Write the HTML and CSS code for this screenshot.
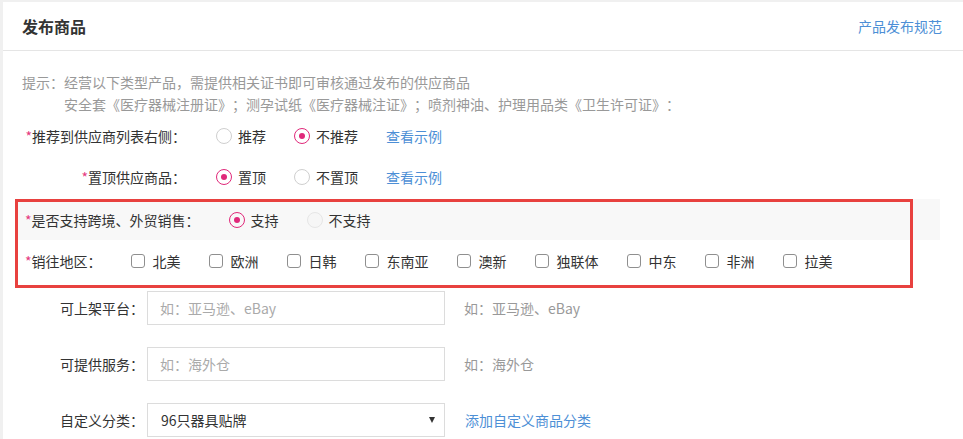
FILE: index.html
```html
<!DOCTYPE html>
<html lang="zh-CN">
<head>
    <meta charset="UTF-8">
    <meta name="viewport" content="width=device-width, initial-scale=1.0">
    <title>发布商品</title>
    <link rel="stylesheet" href="styles.css">
</head>
<body>
    <div class="panel">
        <div class="panel-head">
            <h1 class="panel-title">发布商品</h1>
            <a class="link" href="#">产品发布规范</a>
        </div>

        <div class="notice">
            <p>提示：经营以下类型产品，需提供相关证书即可审核通过发布的供应商品</p>
            <p class="notice-sub">安全套《医疗器械注册证》；测孕试纸《医疗器械注证》；喷剂神油、护理用品类《卫生许可证》：</p>
        </div>

        <div class="form-row">
            <label class="row-label"><i>*</i>推荐到供应商列表右侧：</label>
            <span class="radio"><span class="dot"></span>推荐</span>
            <span class="radio"><span class="dot on"></span>不推荐</span>
            <a class="link" href="#">查看示例</a>
        </div>
        <div class="form-row">
            <label class="row-label"><i>*</i>置顶供应商品：</label>
            <span class="radio"><span class="dot on"></span>置顶</span>
            <span class="radio"><span class="dot"></span>不置顶</span>
            <a class="link" href="#">查看示例</a>
        </div>

        <!-- 跨境区域（红框标注） -->
        <div class="cross-border">
            <div class="form-row shaded">
                <label class="free-label"><i>*</i>是否支持跨境、外贸销售：</label>
                <span class="radio"><span class="dot on"></span>支持</span>
                <span class="radio"><span class="dot off"></span>不支持</span>
            </div>
            <div class="form-row">
                <label class="free-label"><i>*</i>销往地区：</label>
                <span class="check"><span class="box"></span>北美</span>
                <span class="check"><span class="box"></span>欧洲</span>
                <span class="check"><span class="box"></span>日韩</span>
                <span class="check"><span class="box"></span>东南亚</span>
                <span class="check"><span class="box"></span>澳新</span>
                <span class="check"><span class="box"></span>独联体</span>
                <span class="check"><span class="box"></span>中东</span>
                <span class="check"><span class="box"></span>非洲</span>
                <span class="check"><span class="box"></span>拉美</span>
            </div>
            <div class="mark"></div>
        </div>

        <div class="field">
            <label class="field-label">可上架平台：</label>
            <input class="text-input" type="text" placeholder="如：亚马逊、eBay">
            <span class="field-hint">如：亚马逊、eBay</span>
        </div>
        <div class="field">
            <label class="field-label">可提供服务：</label>
            <input class="text-input" type="text" placeholder="如：海外仓">
            <span class="field-hint">如：海外仓</span>
        </div>
        <div class="field">
            <label class="field-label">自定义分类：</label>
            <div class="select">
                <span>96只器具贴牌</span>
                <span class="caret"></span>
            </div>
            <a class="link field-link" href="#">添加自定义商品分类</a>
        </div>
    </div>
</body>
</html>
```

FILE: styles.css
```css
/* 基础 */
body {
    margin: 0;
    background-color: #f0f0f0;
    font-family: "Noto Sans CJK SC", "Microsoft YaHei", sans-serif;
    font-size: 14px;
    color: #333;
    text-spacing-trim: space-all; /* 全角标点不压缩 */
}

p { margin: 0; }

.link {
    color: #4d8fd6;
    text-decoration: none;
}

.panel {
    margin: 2px 0 0 3px;
    background-color: #fff;
    min-height: 460px;
}

/* 标题栏 */
.panel-head {
    display: flex;
    justify-content: space-between;
    align-items: center;
    height: 48px;
    padding: 0 21px 0 19px;
    border-bottom: 1px solid #e5e5e5;
}

.panel-title {
    margin: 0;
    font-size: 16px;
    font-weight: bold;
    color: #333;
}

.panel-head .link { font-size: 14px; }

/* 提示 */
.notice {
    padding: 20px 0 0 19px;
    line-height: 22px;
    color: #999;
}

.notice-sub { padding-left: 42px; }

/* 表单行 */
.form-row {
    display: flex;
    align-items: center;
    height: 41px;
    padding-left: 22px;
}

.form-row:first-of-type { margin-top: 2px; }

.row-label {
    width: 161px;
    margin-right: 30px;
    text-align: right;
    white-space: nowrap;
}

.free-label {
    margin-right: 29px;
    white-space: nowrap;
}

.row-label i, .free-label i {
    font-style: normal;
    color: #e5397f;
}

.radio {
    display: inline-flex;
    align-items: center;
    margin-right: 28px;
}

.dot {
    box-sizing: border-box;
    width: 16px;
    height: 16px;
    margin-right: 6px;
    border: 1px solid #cfcfcf;
    border-radius: 50%;
    display: inline-flex;
    justify-content: center;
    align-items: center;
}

.dot.on { border-color: #e0287a; }
.dot.on::after {
    content: "";
    width: 6px;
    height: 6px;
    border-radius: 50%;
    background-color: #e0287a;
}

.dot.off {
    border-color: #e6e6e6;
    background-color: #f6f6f6;
}

.check {
    display: inline-flex;
    align-items: center;
    margin-right: 28px;
}

.box {
    box-sizing: border-box;
    width: 14px;
    height: 14px;
    margin-right: 8px;
    border: 1px solid #8f8f8f;
    border-radius: 3px;
}

/* 跨境区域 */
.cross-border {
    position: relative;
    margin-left: 13px;
    width: 924px;
}

.cross-border .form-row { padding-left: 9px; }

.shaded { background-color: #f8f8f8; }

.mark {
    position: absolute;
    left: -1px;
    top: 0;
    width: 898px;
    height: 89px;
    box-sizing: border-box;
    border: 3px solid #e8413f;
}

/* 输入字段 */
.field {
    display: flex;
    align-items: center;
    margin-top: 22px;
    padding-left: 57px;
}

.cross-border + .field { margin-top: 10px; }

.field-label {
    width: 87px;
    white-space: nowrap;
}

.text-input, .select {
    box-sizing: border-box;
    width: 298px;
    height: 34px;
    border: 1px solid #dcdcdc;
    padding: 0 12px;
    font-family: inherit;
    font-size: 14px;
    color: #333;
    outline: none;
}

.text-input::placeholder { color: #aaa; }

.select {
    display: flex;
    justify-content: space-between;
    align-items: center;
    padding: 0 9px 0 13px;
}

.caret {
    width: 0;
    height: 0;
    border-left: 3.5px solid transparent;
    border-right: 3.5px solid transparent;
    border-top: 6px solid #333;
}

.field-hint {
    margin-left: 19px;
    color: #999;
}

.field-link { margin-left: 20px; }
```
